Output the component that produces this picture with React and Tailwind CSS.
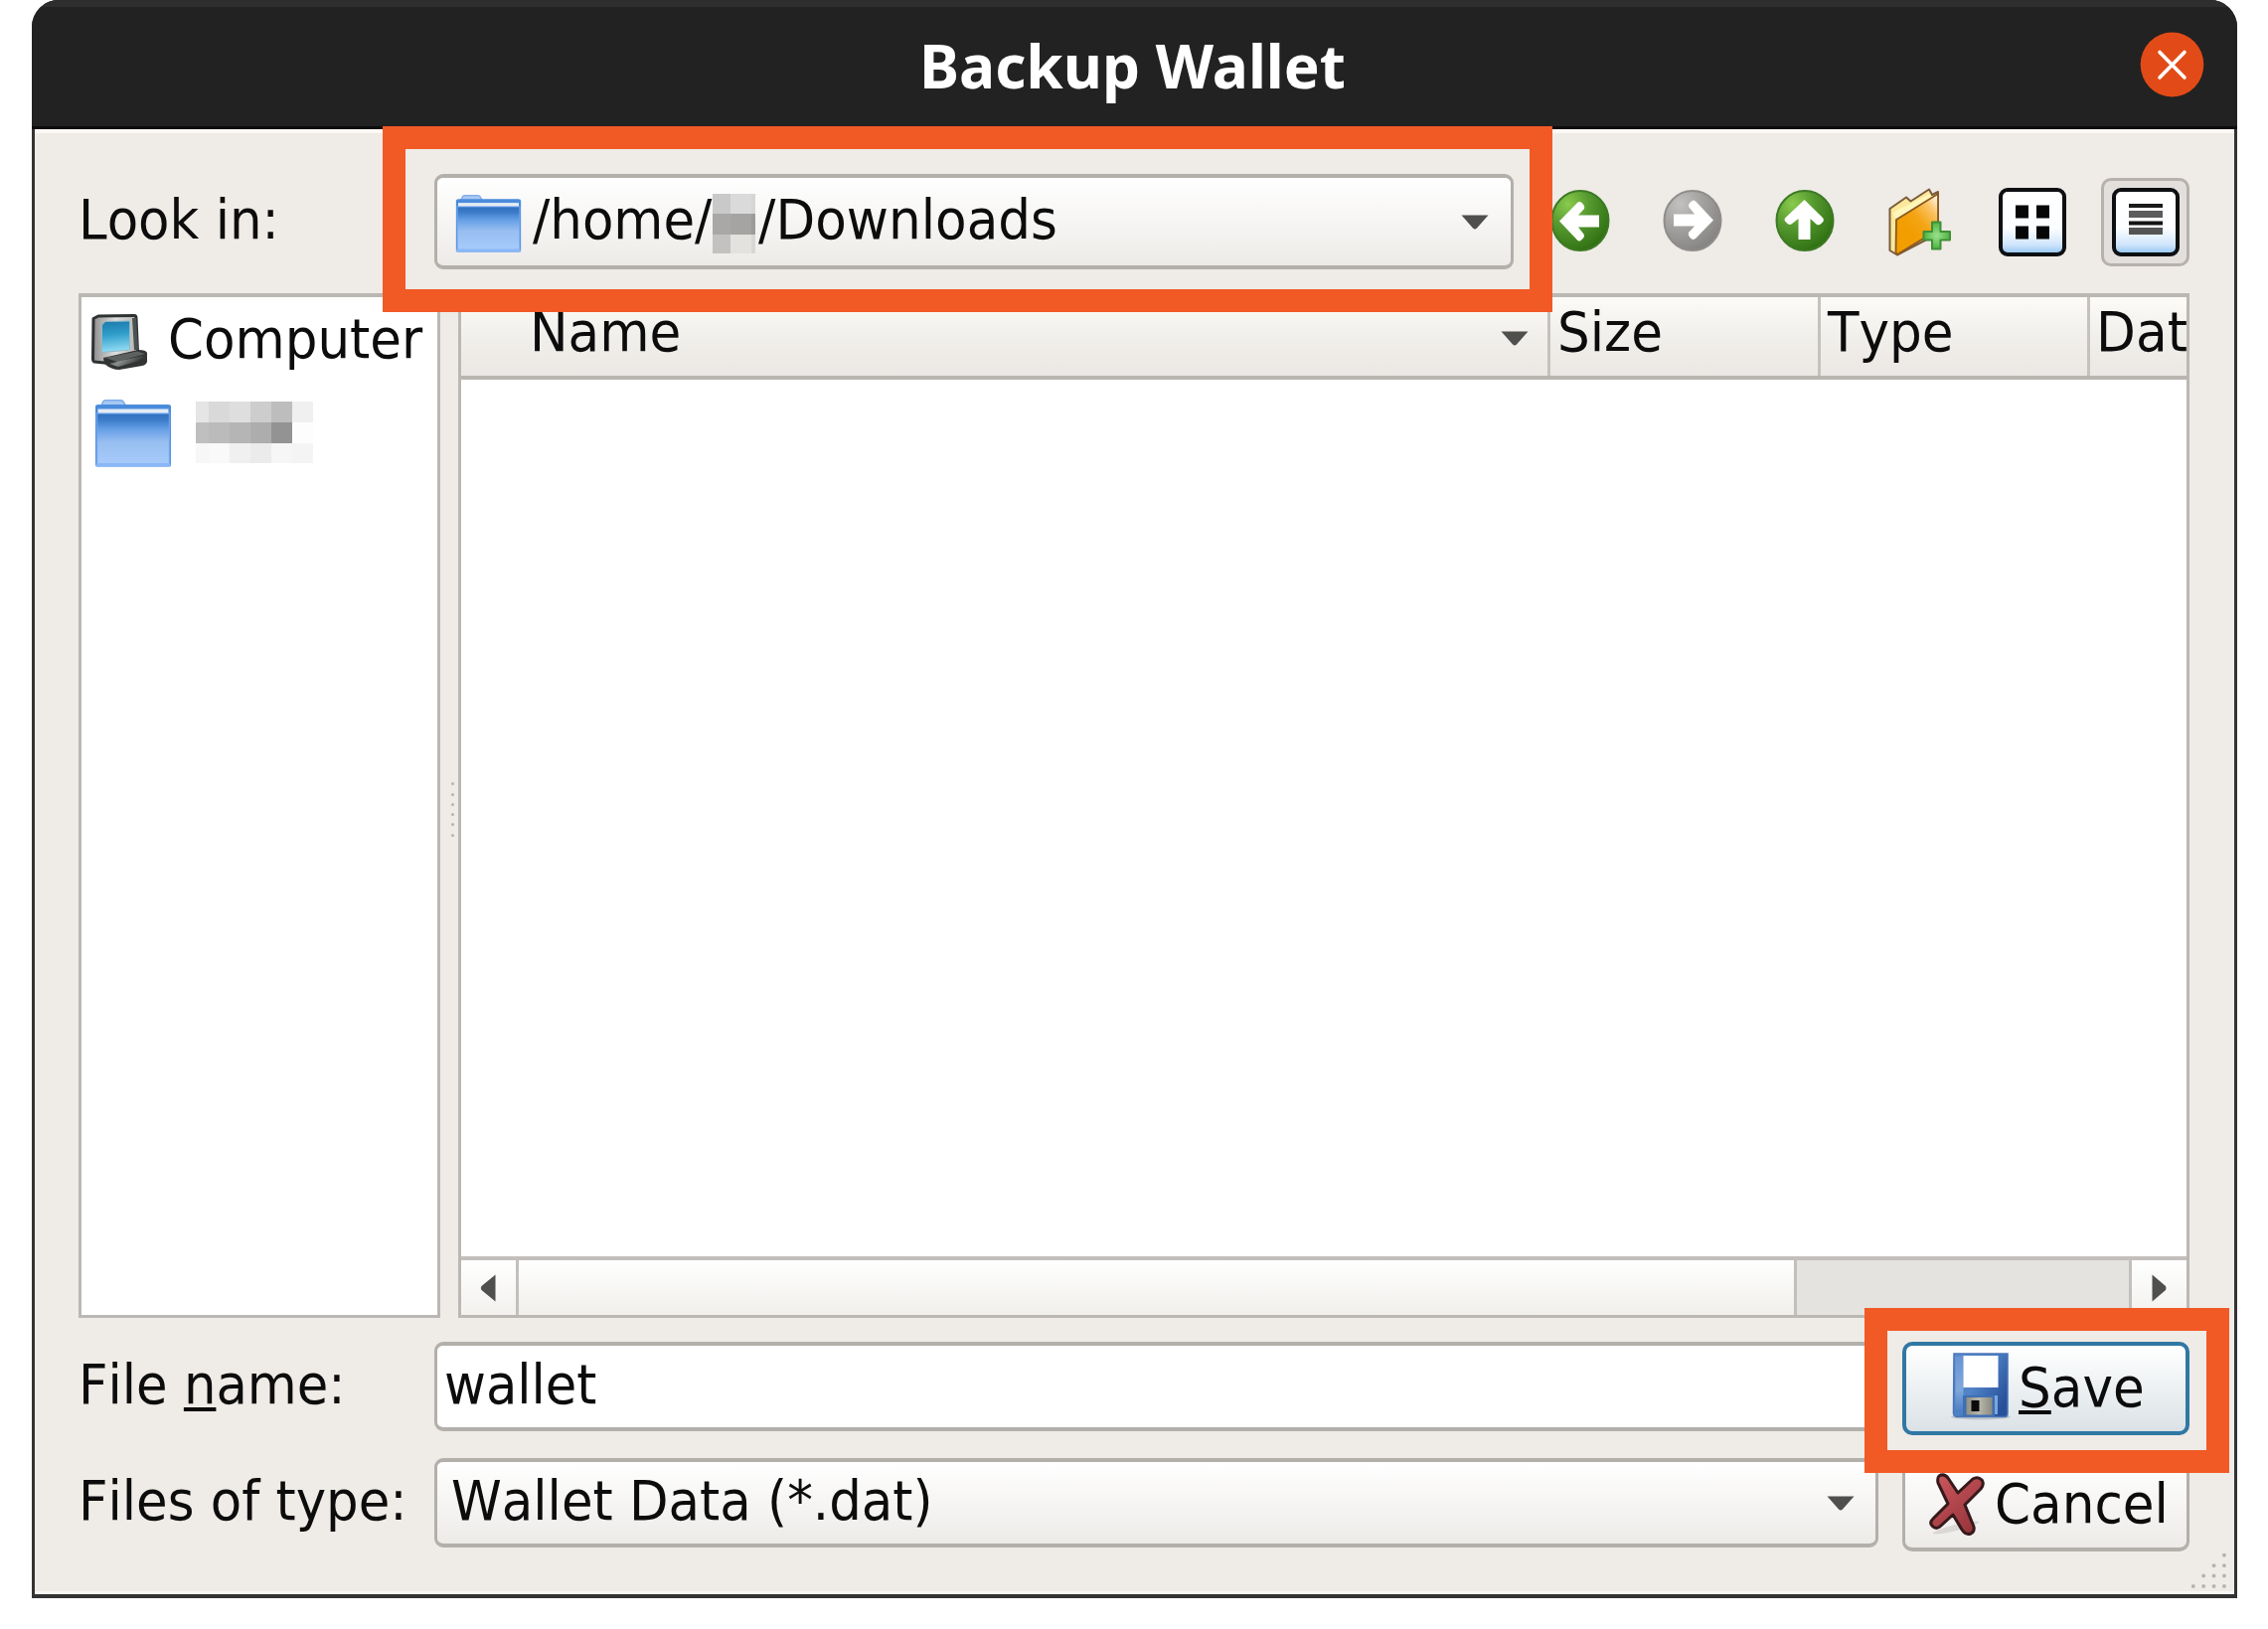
const label =
  'inline-block shrink-0 origin-left whitespace-nowrap text-[56px] leading-[56px] text-[#0c0c0c] [font-kerning:none]';
const key = 'underline decoration-[4px] underline-offset-[4px] [text-decoration-skip-ink:none]';

function Folder({ className, id }) {
  return (
    <svg className={className} viewBox="0 0 78 68" preserveAspectRatio="none">
      <defs>
        <linearGradient id={id} x1="0" y1="0" x2="0" y2="1">
          <stop offset="0" stopColor="#2f6fbe" />
          <stop offset="0.12" stopColor="#3a7ac8" />
          <stop offset="0.3" stopColor="#659fe6" />
          <stop offset="0.55" stopColor="#98bef1" />
          <stop offset="1" stopColor="#a6cbfb" />
        </linearGradient>
      </defs>
      <path d="M6 8 L9 1.5 Q10 .8 12 .8 H26 Q28 .8 29 2 L32 7 H6Z" fill="#a9c8f3" stroke="#7eacea" strokeWidth="1.5" />
      <path d="M1 7 Q1 5 4 5 H74 Q77 5 77 7 V66 Q77 67.500 75 67.500 H3 Q1 67.500 1 66Z" fill="#4a8cdc" />
      <rect x="3.500" y="9.500" width="71" height="5" fill="#e4ebf5" />
      <rect x="2.500" y="14" width="73" height="52" fill={`url(#${id})`} stroke="#76a9f0" strokeWidth="1.600" strokeOpacity="0.7" />
      <rect x="1.500" y="64" width="75" height="3.400" rx="1.500" fill="#8ab7f8" />
    </svg>
  );
}

function Computer() {
  return (
    <svg className="h-[56px] w-[57px] shrink-0" viewBox="0 0 57 56">
      <defs>
        <linearGradient id="screen" x1="0" y1="0" x2="0.1" y2="1">
          <stop offset="0" stopColor="#1d78ac" />
          <stop offset="0.45" stopColor="#2e9cc9" />
          <stop offset="1" stopColor="#8fdcf3" />
        </linearGradient>
        <linearGradient id="bezel" x1="0" y1="0" x2="1" y2="0">
          <stop offset="0" stopColor="#8e8e8e" />
          <stop offset="0.5" stopColor="#dedede" />
          <stop offset="1" stopColor="#b5b5b5" />
        </linearGradient>
        <linearGradient id="base" x1="0" y1="0" x2="1" y2="0.4">
          <stop offset="0" stopColor="#3a3d3c" />
          <stop offset="0.45" stopColor="#8b908e" />
          <stop offset="1" stopColor="#2a2c2b" />
        </linearGradient>
      </defs>
      <path d="M2 4.500 L7 2 L43 1.500 Q45 1.500 45 4 L46.500 38 L13 49 L3 48 Q1.500 47.500 1.500 45Z" fill="url(#bezel)" stroke="#2e3232" strokeWidth="3" strokeLinejoin="round" />
      <path d="M43 4 L45 36" stroke="#4c5151" strokeWidth="4" />
      <path d="M10.500 11 L14 7.500 L38.500 7 V36 L10.500 38.500Z" fill="url(#screen)" stroke="#8fb9c8" strokeWidth="1" />
      <path d="M12 44 L47 36 Q55 36 56 39 L56 48 Q55 51 51 52 L28 56 Q20 56 13 50Z" fill="#313433" />
      <path d="M14 44 L46 37.500 L54 40 L26 48Z" fill="#5d6261" />
      <path d="M18 50 L27 47.500 L52 42 L52 46 L27 53Z" fill="url(#base)" />
    </svg>
  );
}

function ArrowDisc({ tone, rotate }) {
  const green = tone === 'green';
  const id = green ? 'disc-green-' + rotate : 'disc-gray';
  return (
    <svg className="h-[62px] w-[60px] -translate-y-[2px]" viewBox="0 0 60 62">
      <defs>
        <radialGradient id={id} cx="0.28" cy="0.22" r="0.85">
          <stop offset="0" stopColor={green ? '#8acb4d' : '#c3c1c0'} />
          <stop offset="0.45" stopColor={green ? '#55992f' : '#a5a3a1'} />
          <stop offset="1" stopColor={green ? '#2f6f12' : '#858381'} />
        </radialGradient>
      </defs>
      <ellipse cx="30" cy="31" rx="28.500" ry="30" fill={`url(#${id})`} stroke={green ? '#3c7a24' : '#8f8d8b'} strokeWidth="2" />
      <g transform={`rotate(${rotate} 30 31)`}>
        <path d="M49 25.500 H28 L34 19 Q35 16 31.500 13 Q29 11 26.500 13.500 L9 31.500 L26.500 50 Q29 53 31.500 50 Q35 47.500 33.500 44.500 L28 37.500 H49Z" fill="#fff" />
      </g>
    </svg>
  );
}

function NewFolder() {
  return (
    <svg className="h-[69px] w-[63px] -translate-x-[1px]" viewBox="0 0 63 69">
      <defs>
        <linearGradient id="flap" x1="0.95" y1="0" x2="0.4" y2="0.7">
          <stop offset="0" stopColor="#fffaf0" />
          <stop offset="0.3" stopColor="#fbc465" />
          <stop offset="0.65" stopColor="#f4a414" />
          <stop offset="1" stopColor="#f29d00" />
        </linearGradient>
        <radialGradient id="plus">
          <stop offset="0" stopColor="#9ce08d" />
          <stop offset="1" stopColor="#4db342" />
        </radialGradient>
      </defs>
      <path d="M1.500 21 L18 9.500 L22.500 13.500 L41 1.500 L44 7 L50 4 V46 L9 67.500 L1.500 63Z" fill="#fbe89a" stroke="#7a5a3c" strokeWidth="2" strokeLinejoin="round" />
      <path d="M4 25 L42 6 L44 10 L8 33Z" fill="#fff6ba" />
      <path d="M8 32 L50 6 V42 L9 67 L7.500 65Z" fill="url(#flap)" stroke="#8a5a20" strokeWidth="1.800" strokeLinejoin="round" />
      <path d="M44 34.500 H52.500 V44 H62 V52.500 H52.500 V61.500 H44 V52.500 H35.500 V44 H44Z" fill="url(#plus)" stroke="#3f8f37" strokeWidth="2" strokeLinejoin="round" />
    </svg>
  );
}

function ViewIcon({ kind }) {
  const id = 'view-' + kind;
  return (
    <svg className="h-[69px] w-[68px]" viewBox="0 0 68 69">
      <defs>
        <linearGradient id={id} x1="0" y1="0" x2="0" y2="1">
          <stop offset="0" stopColor="#ffffff" />
          <stop offset="0.6" stopColor="#fbfdff" />
          <stop offset="0.85" stopColor="#cfe5fb" />
          <stop offset="1" stopColor="#8fc2f2" />
        </linearGradient>
      </defs>
      <rect x="2" y="2" width="64" height="65" rx="7" fill={`url(#${id})`} stroke="#0d0f12" strokeWidth="4" />
      {kind === 'grid' ? (
        <g fill="#060606">
          <rect x="17" y="17.500" width="13" height="13" />
          <rect x="38" y="17.500" width="13" height="13" />
          <rect x="17" y="38.500" width="13" height="13" />
          <rect x="38" y="38.500" width="13" height="13" />
        </g>
      ) : (
        <g>
          <rect x="17" y="16" width="34" height="4" fill="#1a1a1a" />
          <rect x="17" y="23" width="34" height="7" fill="#5c5c5c" />
          <rect x="17" y="33.500" width="34" height="4" fill="#141414" />
          <rect x="17" y="40" width="34" height="7" fill="#555555" />
        </g>
      )}
    </svg>
  );
}

function Floppy() {
  return (
    <svg className="h-[68px] w-[62px] shrink-0" viewBox="0 0 62 68">
      <defs>
        <linearGradient id="disk" x1="0" y1="0" x2="1" y2="0.7">
          <stop offset="0" stopColor="#5d8ed0" />
          <stop offset="0.5" stopColor="#4f82c6" />
          <stop offset="1" stopColor="#27509a" />
        </linearGradient>
        <linearGradient id="edge" x1="0" y1="0" x2="0" y2="1">
          <stop offset="0" stopColor="#6a94d2" />
          <stop offset="0.6" stopColor="#7fa9dc" />
          <stop offset="1" stopColor="#4a7cc2" />
        </linearGradient>
        <linearGradient id="shutter" x1="0" y1="0" x2="1" y2="0">
          <stop offset="0" stopColor="#8f8f84" />
          <stop offset="0.5" stopColor="#b9b7ab" />
          <stop offset="1" stopColor="#8b8a80" />
        </linearGradient>
      </defs>
      <ellipse cx="31" cy="64.500" rx="30" ry="3" fill="#b3b9bd" opacity="0.7" />
      <path d="M4 1 H58 V61 Q58 64.500 55 64.500 H7 Q4 64.500 3.500 61Z" fill="url(#disk)" stroke="#4a74b8" strokeWidth="1.500" />
      <rect x="5.500" y="4" width="8" height="56" fill="url(#edge)" />
      <rect x="13.500" y="3" width="35" height="32" fill="#fff" />
      <rect x="13" y="43" width="32" height="21" fill="#3e6fb4" />
      <rect x="16.500" y="45" width="26" height="17.500" fill="url(#shutter)" />
      <rect x="21.500" y="48" width="8" height="11" fill="#0b0b0b" />
      <rect x="45" y="43" width="3" height="19" fill="#7aa6dd" />
    </svg>
  );
}

function CancelMark() {
  return (
    <svg className="h-[66px] w-[58px] shrink-0" viewBox="0 0 58 66">
      <defs>
        <linearGradient id="cross" x1="0" y1="0" x2="0.7" y2="1">
          <stop offset="0" stopColor="#cf5960" />
          <stop offset="1" stopColor="#97353c" />
        </linearGradient>
      </defs>
      <ellipse cx="27" cy="56" rx="24" ry="3" fill="#dad7d5" transform="rotate(-14 27 56)" />
      <path d="M10 4 Q15 1 19 6 L29 21 L44 7 Q49 4 53 8 Q56 12 52 17 L36 33 L45 55 Q46 60 42 62 Q37 64 33 58 L24 43 L12 54 Q7 59 3 54 Q0 51 4 47 L19 32 L9 11 Q8 6 10 4Z" fill="url(#cross)" stroke="#35191b" strokeWidth="3" strokeLinejoin="round" />
    </svg>
  );
}

function Caret({ className = '' }) {
  return (
    <svg className={'h-[15px] w-[28px] shrink-0 ' + className} viewBox="0 0 28 15">
      <path d="M.5 .5 H27.500 L16 13.500 Q14 15.500 12 13.500Z" fill="#4f4f4e" />
    </svg>
  );
}

const homeMosaic = [
  ['bg-[#e5e5e5]', 'bg-[#d9d9d9]', 'bg-[#dedede]', 'bg-[#cdcdcd]', 'bg-[#bdbdbd]', 'bg-[#f0f0f0]'],
  ['bg-[#bfbfbf]', 'bg-[#bbbbbb]', 'bg-[#b5b5b5]', 'bg-[#adadad]', 'bg-[#939393]', 'bg-[#fdfdfd]'],
  ['bg-[#f7f7f7]', 'bg-[#f9f9f9]', 'bg-[#f0f0f0]', 'bg-[#ebebeb]', 'bg-[#f6f6f6]', 'bg-[#f4f4f4]'],
];
const pathMosaic = [
  ['bg-[#c9c9c9]', 'bg-[#dadada]', 'bg-[#d6d6d6]'],
  ['bg-[#a9a8a7]', 'bg-[#a5a4a3]', 'bg-[#9b9b9a]'],
  ['bg-[#c3c2c1]', 'bg-[#e3e2df]', 'bg-[#d8d7d5]'],
];

function Mosaic({ rows, className }) {
  return (
    <div className={'grid shrink-0 ' + className}>
      {rows.flat().map((c, i) => (
        <div key={i} className={c} />
      ))}
    </div>
  );
}

export default function App() {
  return (
    <div className="h-[1639px] w-[2282px] overflow-hidden bg-white pl-[32px] font-['DejaVu_Sans',sans-serif]">
      <div className="relative h-[1608px] w-[2219px]">
        <div className="flex h-full flex-col overflow-hidden rounded-t-[27px] bg-[#333333]">
          <header className="flex h-[130px] shrink-0 items-center border-t-[7px] border-b-[3px] border-t-[#2e2e2e] border-b-[#0d0d0d] bg-[#222222] pr-[33px]">
            <div className="w-[94px]" />
            <h1 className="flex-1 -translate-y-[1px] text-center font-['Noto_Sans',sans-serif] text-[60.3px] leading-[64px] font-bold text-white">
              Backup Wallet
            </h1>
            <svg className="h-[66px] w-[65px] -translate-y-[2px]" viewBox="0 0 65 66">
              <ellipse cx="32.500" cy="33" rx="31.800" ry="32.500" fill="#e24b17" />
              <path d="M20 20.500 L45 46 M45 20.500 L20 46" stroke="#fff" strokeWidth="3.600" strokeLinecap="round" />
            </svg>
          </header>

          <main className="mx-[3px] mb-[4px] flex flex-1 flex-col border-t-[4px] border-b-[3px] border-t-[#fcf9f5] border-b-[#faf6f2] bg-[#efebe6] pt-[41px] pr-[45px] pl-[44px]">
            <div className="flex h-[96px] shrink-0">
              <span className={label + ' mt-[18px] w-[358px] scale-x-[0.918]'}>Look in:</span>
              <div className="flex h-[96px] w-[1086px] shrink-0 rounded-[9px] border-[4px] border-x-[3px] border-[#b3afab] bg-gradient-to-b from-white to-[#edebe8]">
                <Folder id="folder-path" className="mt-[17px] ml-[18px] h-[58px] w-[67px] shrink-0" />
                <span className={label + ' mt-[14px] ml-[11px] w-[181px] scale-x-[0.918]'}>/home/</span>
                <Mosaic rows={pathMosaic} className="mt-[16px] h-[60px] w-[43px] grid-cols-[18px_21px_4px] grid-rows-[20px_21px_19px]" />
                <span className={label + ' mt-[14px] ml-[3px] scale-x-[0.922]'}>/Downloads</span>
                <Caret className="mt-[37px] mr-[22px] ml-auto" />
              </div>
              <div className="mt-[4px] ml-auto flex h-[89px] shrink-0 items-center">
                <ArrowDisc tone="green" rotate={0} />
                <div className="w-[53px]" />
                <ArrowDisc tone="gray" rotate={180} />
                <div className="w-[53px]" />
                <ArrowDisc tone="green" rotate={90} />
                <div className="w-[55px]" />
                <NewFolder />
                <div className="w-[47px]" />
                <ViewIcon kind="grid" />
                <div className="w-[35px]" />
                <div className="flex h-[89px] w-[89px] items-center justify-center rounded-[10px] border-[3px] border-[#b6b1ad] bg-[#e3dfdc]">
                  <ViewIcon kind="list" />
                </div>
              </div>
            </div>

            <div className="mt-[24px] flex h-[1031px] shrink-0">
              <aside className="flex w-[364px] shrink-0 flex-col border-[3px] border-t-[4px] border-[#bbb8b3] bg-white">
                <div className="flex">
                  <div className="mt-[17px] ml-[10px]"><Computer /></div>
                  <span className={label + ' mt-[14px] ml-[20px] scale-x-[0.92]'}>Computer</span>
                </div>
                <div className="mt-[30px] ml-[13px] flex">
                  <Folder id="folder-home" className="h-[68px] w-[78px] shrink-0" />
                  <Mosaic rows={homeMosaic} className="mt-[2px] ml-[24px] h-[62px] w-[118px] grid-cols-[13px_21px_21px_21px_21px_21px] grid-rows-[21px_21px_20px]" />
                </div>
              </aside>

              <div className="flex w-[18px] shrink-0 flex-col items-end justify-center gap-[7.3px] pr-[4px]">
                {[0, 1, 2, 3, 4, 5].map((i) => (
                  <div key={i} className="relative top-[4px] h-[3px] w-[3px] rounded-full bg-[#b5b2ae]" />
                ))}
              </div>

              <section className="flex min-w-0 flex-1 flex-col border-[3px] border-t-[4px] border-[#bbb8b3] bg-white">
                <div className="flex h-[83px] shrink-0 overflow-hidden border-b-[4px] border-[#b9b5b1] bg-gradient-to-b from-[#fdfbf8] via-[#f1efeb] to-[#ebe7e4]">
                  <div className="flex w-[1096px] shrink-0 border-r-[3px] border-[#c5c1bd]">
                    <span className={label + ' mt-[7px] ml-[69px] scale-x-[0.922]'}>Name</span>
                    <Caret className="mt-[34px] mr-[19px] ml-auto" />
                  </div>
                  <div className="w-[272px] shrink-0 border-r-[3px] border-[#c5c1bd]">
                    <span className={label + ' mt-[7px] ml-[7px] scale-x-[0.922]'}>Size</span>
                  </div>
                  <div className="w-[271px] shrink-0 border-r-[3px] border-[#c5c1bd]">
                    <span className={label + ' mt-[7px] ml-[7px] scale-x-[0.922]'}>Type</span>
                  </div>
                  <span className={label + ' mt-[7px] ml-[6px] scale-x-[0.925]'}>Dat</span>
                </div>
                <div className="flex-1" />
                <div className="flex h-[59px] shrink-0 border-t-[4px] border-[#c3bfbc] bg-[#e4e3df]">
                  <div className="flex w-[58px] shrink-0 items-center border-r-[3px] border-[#c3bfbc] bg-gradient-to-b from-white to-[#f2f1ee] pl-[19px]">
                    <svg className="h-[28px] w-[16px]" viewBox="0 0 16 28">
                      <path d="M15.500 .5 V27.500 L1.500 16 Q0 14 1.500 12Z" fill="#4f4f4e" />
                    </svg>
                  </div>
                  <div className="w-[1286px] shrink-0 border-r-[3px] border-[#c3bfbc] bg-gradient-to-b from-white to-[#f0efeb]" />
                  <div className="flex-1" />
                  <div className="flex w-[58px] shrink-0 items-center border-l-[3px] border-[#c3bfbc] bg-gradient-to-b from-white to-[#f2f1ee] pl-[20px]">
                    <svg className="h-[28px] w-[15px]" viewBox="0 0 15 28">
                      <path d="M.5 .5 V27.500 L14 16 Q15 14 14 12Z" fill="#4f4f4e" />
                    </svg>
                  </div>
                </div>
              </section>
            </div>

            <div className="mt-[24px] flex shrink-0">
              <span className={label + ' mt-[15px] w-[358px] scale-x-[0.916]'}>
                File <span className={key}>n</span>ame:
              </span>
              <div className="h-[90px] w-[1452px] shrink-0 rounded-[9px] border-[4px] border-x-[3px] border-[#b3afab] bg-white">
                <span className={label + ' mt-[11px] ml-[7px] scale-x-[0.915]'}>wallet</span>
              </div>
              <div className="ml-[25px] flex h-[94px] w-[289px] shrink-0 rounded-[10px] border-[4px] border-[#3078a4] bg-gradient-to-b from-white to-[#dbe2e6]">
                <div className="mt-[7px] ml-[44px]"><Floppy /></div>
                <span className={label + ' mt-[14px] ml-[7px] scale-x-[0.922]'}>
                  <span className={key}>S</span>ave
                </span>
              </div>
            </div>

            <div className="mt-[23px] flex shrink-0">
              <span className={label + ' mt-[15px] w-[358px] scale-x-[0.917]'}>Files of type:</span>
              <div className="flex h-[90px] w-[1453px] shrink-0 rounded-[9px] border-[4px] border-x-[3px] border-[#b3afab] bg-gradient-to-b from-white to-[#edebe8]">
                <span className={label + ' mt-[11px] ml-[14px] scale-x-[0.918]'}>Wallet Data (*.dat)</span>
                <Caret className="mt-[34px] mr-[21px] ml-auto" />
              </div>
              <div className="ml-[24px] flex h-[94px] w-[289px] shrink-0 rounded-[10px] border-[4px] border-x-[3px] border-[#b3afab] bg-gradient-to-b from-white to-[#edebe8]">
                <div className="mt-[10px] ml-[24px]"><CancelMark /></div>
                <span className={label + ' mt-[14px] ml-[8px] scale-x-[0.922]'}>Cancel</span>
              </div>
            </div>
          </main>
        </div>

        <svg className="absolute right-[10px] bottom-[9px] h-[37px] w-[37px]" viewBox="0 0 37 37">
          {[[0, 3], [1, 2], [1, 3], [2, 1], [2, 2], [2, 3], [3, 0], [3, 1], [3, 2], [3, 3]].map(([r, c]) => (
            <rect key={r + '-' + c} x={1 + c * 10.400} y={1 + r * 10.400} width="3.500" height="3.500" rx="1" fill="#b5b2ae" />
          ))}
        </svg>
        <div className="absolute top-[127px] left-[353px] h-[187px] w-[1177px] border-[23px] border-[#f15a24]" />
        <div className="absolute top-[1316px] left-[1844px] h-[166px] w-[367px] border-[23px] border-[#f15a24]" />
      </div>
    </div>
  );
}
